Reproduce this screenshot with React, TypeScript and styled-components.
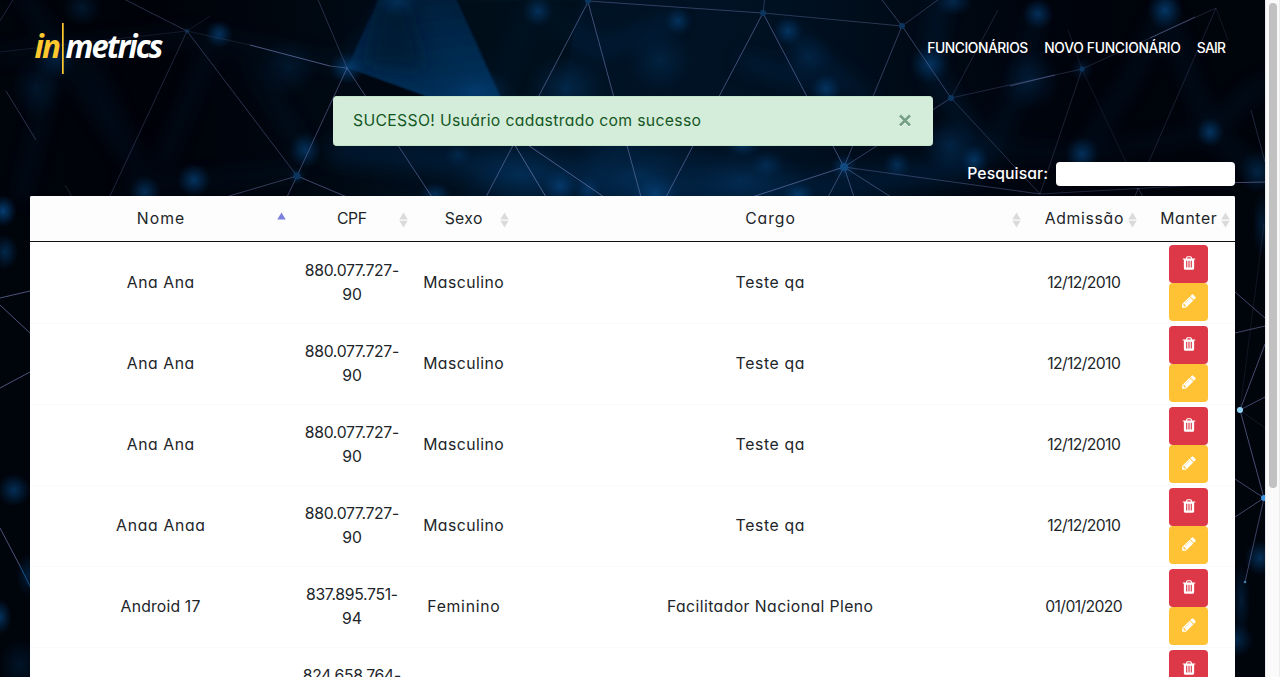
import React from 'react';
import styled, { createGlobalStyle } from 'styled-components';

const GlobalStyle = createGlobalStyle`
  * { box-sizing: border-box; }
  html, body { margin: 0; padding: 0; }
  body {
    height: 677px;
    overflow: hidden;
    background: #000207;
    color: #212529;
    font-family: Inter, "Noto Sans", sans-serif;
    font-feature-settings: "cv11" 1;
    font-size: 15.75px;
    line-height: 24px;
  }
`;

const Window = styled.div`
  position: relative;
  display: flex;
  width: 1280px;
  height: 677px;
  overflow: hidden;
`;

const Backdrop = styled.svg`
  position: absolute;
  inset: 0 auto auto 0;
`;

const Page = styled.div`
  position: relative;
  width: 1265px;
  padding: 0 30px;
`;

const ScrollTrack = styled.div`
  position: relative;
  width: 15px;
  padding: 3px 3px 0 4px;
  background: #fafafa;
  border-left: 1px solid #e8e8e8;
  border-right: 1px solid #ededed;
`;

const ScrollThumb = styled.div`
  width: 8px;
  margin-left: -1px;
  height: 485px;
  border-radius: 4px;
  background: #c1c1c1;
`;

const Header = styled.header`
  display: flex;
  justify-content: space-between;
  align-items: center;
  height: 96px;
  padding: 0 9px 0 0;
`;

const Nav = styled.nav`
  display: flex;
  gap: 16px;
`;

const Txt = styled.span<{ $ls?: number }>`
  white-space: nowrap;
  letter-spacing: ${(p) => p.$ls ?? 0}px;
  margin-right: ${(p) => -(p.$ls ?? 0)}px;
`;

const NavLink = styled(Txt)`
  color: #fff;
  font-size: 13.8px;
  font-weight: 500;
`;

const Alert = styled.div`
  display: flex;
  justify-content: space-between;
  align-items: center;
  width: 600px;
  height: 50px;
  margin: 0 auto 16px 303px;
  padding: 0 21px 0 20px;
  border: 1px solid #c3e6cb;
  border-width: 1px 0;
  border-radius: 4px;
  background: #d4edda;
  color: #155724;
`;

const CloseIcon = styled.svg`
  display: block;
`;

const SearchRow = styled.label`
  display: flex;
  justify-content: flex-end;
  align-items: center;
  height: 24px;
  margin-bottom: 10px;
  gap: 8px;
  color: #fff;
  font-weight: 500;
`;

const SearchInput = styled.input`
  width: 179px;
  height: 24px;
  padding: 0 4px;
  border: 0;
  border-radius: 4px;
  background: #fff;
`;

const Table = styled.div`
  width: 1205px;
  background: #fff;
  border-radius: 2px 2px 0 0;
`;

const Row = styled.div`
  display: grid;
  grid-template-columns: 261px 122px 101px 512px 116px 93px;
  align-items: center;
  height: 81px;
  border-top: 1px solid #fafafa;
  text-align: center;
  &:nth-child(2) { border-top-color: transparent; }
`;

const HeadRow = styled(Row)`
  height: 46px;
  border-top: 0;
  border-bottom: 1px solid #111;
  border-radius: 2px 2px 0 0;
  background: #fdfdfd;
`;

const HeadCell = styled.div`
  position: relative;
`;

const SortIcon = styled.svg`
  position: absolute;
  right: 5px;
  top: 5px;
`;

const Cell = styled.div``;

const Actions = styled.div`
  display: flex;
  flex-direction: column;
  align-items: center;
`;

const ActionButton = styled.button<{ $color: string }>`
  display: flex;
  justify-content: center;
  align-items: center;
  width: 39px;
  height: 38px;
  padding: 0 0 2px 0;
  border: 0;
  border-radius: 4px;
  background: ${(p) => p.$color};
`;

type Line = [number, number, number, number, number];
const lines: Line[] = [
  [187, 31, 116, -5, 0.32], [187, 31, 0, 52, 0.14], [187, 31, 210, 16, 0.14], [187, 31, 250, 45, 0.15],
  [250, 45, 330, 66, 0.6], [330, 66, 347, 68, 0.4], [187, 31, 297, 176, 0.35], [187, 31, 110, 196, 0.26],
  [297, 176, 229, 196, 0.4], [297, 176, 347, 197, 0.5], [297, 176, 287, 197, 0.45], [297, 176, 347, 68, 0.45],
  [347, 68, 316, -5, 0.3], [347, 68, 432, 197, 0.5], [588, 2, 486, 197, 0.5], [588, 2, 641, 197, 0.5],
  [588, 1, 763, 13, 0.38], [763, 13, 902, 26, 0.33], [513, 142, 546, 197, 0.6], [522, 141, 604, 197, 0.6],
  [763, 13, 666, 197, 0.5], [763, 13, 844, 167, 0.5], [763, 13, 765, -4, 0.3], [902, 26, 879, -4, 0.4],
  [902, 26, 942, -3, 0.32], [902, 26, 951, 98, 0.42], [902, 26, 844, 167, 0.4], [951, 98, 844, 167, 0.4],
  [951, 98, 1082, 69, 0.24], [1010, 86, 1055, 75, 0.42], [951, 98, 998, 10, 0.22], [951, 98, 1040, 194, 0.3],
  [844, 167, 752, 197, 0.55], [844, 167, 828, 197, 0.45], [844, 167, 854, 197, 0.45], [844, 167, 891, 197, 0.45],
  [844, 167, 1040, 194, 0.35], [1082, 69, 1216, 8, 0.22], [1150, 38, 1195, 17, 0.4], [1082, 69, 1040, 194, 0.22],
  [1082, 69, 1068, 30, 0.15], [1082, 69, 1126, 162, 0.13], [1216, 8, 1147, 166, 0.2], [1216, 8, 1228, 40, 0.15],
  [1040, 194, 1235, 183, 0.25], [1216, 183, 1265, 182, 0.5], [1251, 110, 1265, 162, 0.25],
  [1135, 197, 1138, 188, 0.3], [1138, 188, 1143, 197, 0.3],
  [6, 91, 36, 140, 0.34], [0, 21, 14, -2, 0.25], [65, 185, 72, 197, 0.2],
  [0, 298, 30, 291, 0.6], [0, 305, 30, 333, 0.6], [0, 388, 30, 372, 0.6], [0, 528, 20, 566, 0.6],
  [1235, 292, 1265, 318, 0.5], [1235, 333, 1265, 326, 0.5], [1240, 410, 1265, 344, 0.55],
  [1240, 410, 1265, 397, 0.5], [1240, 410, 1264, 498, 0.55], [1235, 479, 1264, 498, 0.5],
  [1235, 517, 1264, 498, 0.5], [1264, 498, 1245, 582, 0.45], [1240, 410, 1264, 224, 0.12],
  [1240, 410, 1265, 428, 0.15],
];

// x, y, horizontal radius, vertical radius, opacity
type Glow = [number, number, number, number, number];
const glows: Glow[] = [
  [82, 8, 20, 18, 0.3], [55, 58, 22, 22, 0.4], [36, 88, 26, 32, 0.25], [219, 34, 14, 14, 0.7],
  [194, 180, 17, 17, 0.7], [145, 192, 16, 16, 0.6], [305, 150, 16, 18, 0.65], [288, 68, 30, 30, 0.25],
  [347, 68, 18, 16, 0.75], [397, 2, 24, 16, 0.45], [475, 92, 44, 24, 0.5], [538, 11, 16, 16, 0.6],
  [565, 88, 40, 34, 0.4], [458, 155, 14, 12, 0.35], [435, 194, 16, 12, 0.6], [560, 186, 18, 18, 0.75],
  [588, 190, 14, 16, 0.6], [655, 194, 26, 20, 0.8], [678, 21, 14, 14, 0.6], [660, 60, 34, 34, 0.3],
  [788, 31, 15, 15, 0.65], [808, 58, 26, 24, 0.3], [826, 89, 16, 16, 0.65], [743, 145, 18, 12, 0.6],
  [767, 165, 18, 14, 0.45], [798, 194, 18, 12, 0.7], [930, 64, 20, 20, 0.65], [897, 165, 14, 14, 0.55],
  [953, 2, 20, 14, 0.5], [950, 145, 28, 30, 0.4], [974, 160, 15, 16, 0.65], [1038, 14, 16, 16, 0.65],
  [1030, 80, 32, 32, 0.3], [1082, 154, 17, 18, 0.65], [1165, 10, 18, 20, 0.75], [1210, 132, 14, 15, 0.7],
  [1258, 172, 20, 22, 0.45], [1082, 69, 12, 12, 0.3], [297, 176, 9, 9, 0.4], [844, 167, 14, 14, 0.6],
  [520, 175, 70, 40, 0.4], [640, 175, 90, 44, 0.45], [740, 180, 70, 36, 0.4],
  [3, 211, 14, 16, 0.9], [5, 252, 14, 18, 0.55], [14, 490, 17, 17, 0.65], [0, 617, 12, 18, 0.7],
  [28, 575, 12, 22, 0.4], [20, 665, 22, 28, 0.25], [1260, 558, 16, 18, 0.65], [1236, 640, 18, 18, 0.55],
  [1241, 600, 10, 40, 0.35], [1262, 224, 10, 34, 0.35],
];

const NetworkBackdrop = () => (
  <Backdrop width="1265" height="677" viewBox="0 0 1265 677" aria-hidden="true">
    <defs>
      <linearGradient id="base">
        <stop offset="0" stopColor="#00040b" />
        <stop offset="0.12" stopColor="#000209" />
        <stop offset="0.25" stopColor="#000811" />
        <stop offset="0.42" stopColor="#001426" />
        <stop offset="0.62" stopColor="#001122" />
        <stop offset="0.74" stopColor="#000914" />
        <stop offset="0.85" stopColor="#00030b" />
        <stop offset="1" stopColor="#00040b" />
      </linearGradient>
      <radialGradient id="glow">
        <stop offset="0" stopColor="#064680" />
        <stop offset="0.45" stopColor="#04386a" stopOpacity="0.65" />
        <stop offset="1" stopColor="#022a54" stopOpacity="0" />
      </radialGradient>
      <linearGradient id="shard" x1="0.5" y1="0" x2="0.7" y2="1">
        <stop offset="0" stopColor="#012240" />
        <stop offset="1" stopColor="#043c70" />
      </linearGradient>
      <filter id="soft" x="-30%" y="-30%" width="160%" height="160%">
        <feGaussianBlur stdDeviation="9" />
      </filter>
      <filter id="edge"><feGaussianBlur stdDeviation="1.2" /></filter>
    </defs>
    <rect width="1265" height="677" fill="url(#base)" />
    <g filter="url(#soft)" fill="none" stroke="#022c52" strokeWidth="13" opacity="0.42">
      <path d="M20 -10L130 160M55 60L20 200M90 60L150 195M210 50L160 170M250 60L310 160" opacity="0.5" />
      <path d="M0 55L190 35L400 75M120 190L300 170" opacity="0.4" />
      <path d="M345 68L400 0M430 0L490 100M530 10L500 90M678 20L600 50L540 10M788 31L870 100" />
      <path d="M330 150L450 160L660 195L850 185L980 165" strokeWidth="26" />
      <path d="M560 190L640 130M740 60L840 90M940 0L930 70L990 160" />
      <path d="M1035 15L1025 80L985 160M1165 10L1130 80L1082 155M1165 10L1210 132L1265 175M1210 130L1265 80" opacity="0.6" />
      <path d="M930 145L1080 155L1210 132" opacity="0.4" />
    </g>
    <polygon points="457,0 580,0 560,96 501,96" fill="#000915" opacity="0.6" filter="url(#edge)" />
    <polygon points="380,-4 455,-4 501,98 430,98 347,68" fill="url(#shard)" opacity="0.75" filter="url(#edge)" />
    <polygon points="383,0 404,0 425,70 366,64" fill="#00162c" opacity="0.6" filter="url(#soft)" />
    <polygon points="347,68 430,98 366,98" fill="#00060e" opacity="0.7" />
    {glows.map(([x, y, rx, ry, o], i) => (
      <ellipse key={i} cx={x} cy={y} rx={rx} ry={ry} fill="url(#glow)" opacity={o} />
    ))}
    <g stroke="#8088c4">
      {lines.map(([x1, y1, x2, y2, o], i) => (
        <line key={i} x1={x1} y1={y1} x2={x2} y2={y2} opacity={o} />
      ))}
    </g>
    <line x1="20" y1="566" x2="31" y2="588" stroke="#12578f" />
    <g fill="#0c355e">
      <circle cx="187" cy="31" r="2.5" opacity="0.5" />
      <circle cx="297" cy="176" r="3.5" />
      <circle cx="588" cy="1" r="3" />
      <circle cx="763" cy="13" r="3" />
      <circle cx="902" cy="26" r="3" />
      <circle cx="951" cy="98" r="3" />
      <circle cx="1082" cy="69" r="2.5" />
      <circle cx="844" cy="167" r="4" fill="#124a80" />
    </g>
    <circle cx="1240" cy="410" r="3" fill="#8fd0f2" />
    <circle cx="1264" cy="498" r="3" fill="#3c93dc" />
    <circle cx="1245" cy="582" r="1.3" fill="#477cab" />
  </Backdrop>
);

const Logo = () => (
  <svg width="140" height="60" viewBox="30 18 140 60" role="img" aria-label="inmetrics">
    <g fontFamily="Open Sans" fontStyle="italic" fontWeight="700" fontSize="33" letterSpacing="-2">
      <text x="34.500" y="58" fill="#ffc92e" textLength="24.500" lengthAdjust="spacingAndGlyphs">in</text>
      <text x="65.500" y="58" fill="#fff" textLength="96" lengthAdjust="spacingAndGlyphs">metrics</text>
    </g>
    <rect x="62" y="23" width="1.700" height="51" fill="#ffc92e" />
  </svg>
);

const TrashIcon = () => (
  <svg width="16" height="16" viewBox="0 0 1792 1792" fill="#fff">
    <path d="M704 1376v-704q0-14-9-23t-23-9h-64q-14 0-23 9t-9 23v704q0 14 9 23t23 9h64q14 0 23-9t9-23zm256 0v-704q0-14-9-23t-23-9h-64q-14 0-23 9t-9 23v704q0 14 9 23t23 9h64q14 0 23-9t9-23zm256 0v-704q0-14-9-23t-23-9h-64q-14 0-23 9t-9 23v704q0 14 9 23t23 9h64q14 0 23-9t9-23zm-544-992h448l-48-117q-7-9-17-11h-317q-10 2-17 11zm928 32v64q0 14-9 23t-23 9h-96v948q0 83-47 143.500t-113 60.500h-832q-66 0-113-58.500t-47-141.500v-952h-96q-14 0-23-9t-9-23v-64q0-14 9-23t23-9h309l70-167q15-37 54-63t79-26h320q40 0 79 26t54 63l70 167h309q14 0 23 9t9 23z" />
  </svg>
);

const PencilIcon = () => (
  <svg width="16" height="16" viewBox="0 0 1792 1792" fill="#fff">
    <path d="M491 1536l91-91-235-235-91 91v107h128v128h107zm523-928q0-22-22-22-10 0-17 7l-542 542q-7 7-7 17 0 22 22 22 10 0 17-7l542-542q7-7 7-17zm-54-192l416 416-832 832h-416v-416zm683 96q0 53-37 90l-166 166-416-416 166-165q36-38 90-38 53 0 91 38l235 234q37 39 37 91z" />
  </svg>
);

const Sort = ({ active }: { active?: boolean }) => (
  <SortIcon width="9" height="16" viewBox="0 0 9 16">
    <path d="M4.500 0.500L8.700 7.500H0.300Z" fill={active ? '#7b7fde' : '#dadada'} />
    {!active && <path d="M4.500 15.500L8.700 8.700H0.300Z" fill="#dadada" />}
  </SortIcon>
);

const columns: [string, number][] = [
  ['Nome', 1], ['CPF', -0.4], ['Sexo', 0.35], ['Cargo', 0.95], ['Admissão', 0.7], ['Manter', 0.65],
];

const employees = [
  { name: 'Ana Ana', nls: 0.55, cpf: ['880.077.727-', '90'], sex: 'Masculino', role: 'Teste qa', rls: 0.65, date: '12/12/2010' },
  { name: 'Ana Ana', nls: 0.55, cpf: ['880.077.727-', '90'], sex: 'Masculino', role: 'Teste qa', rls: 0.65, date: '12/12/2010' },
  { name: 'Ana Ana', nls: 0.55, cpf: ['880.077.727-', '90'], sex: 'Masculino', role: 'Teste qa', rls: 0.65, date: '12/12/2010' },
  { name: 'Anaa Anaa', nls: 0.68, cpf: ['880.077.727-', '90'], sex: 'Masculino', role: 'Teste qa', rls: 0.65, date: '12/12/2010' },
  { name: 'Android 17', nls: 0.18, cpf: ['837.895.751-', '94'], sex: 'Feminino', role: 'Facilitador Nacional Pleno', rls: 0.42, date: '01/01/2020' },
  { name: 'Android 17', nls: 0.18, cpf: ['824.658.764-', '12'], sex: 'Feminino', role: 'Facilitador Nacional Pleno', rls: 0.42, date: '01/01/2020' },
];

export default function App() {
  return (
    <>
      <GlobalStyle />
      <Window>
        <NetworkBackdrop />
        <Page>
          <Header>
            <Logo />
            <Nav>
              <NavLink $ls={-0.42}>FUNCIONÁRIOS</NavLink>
              <NavLink $ls={-0.28}>NOVO FUNCIONÁRIO</NavLink>
              <NavLink $ls={-0.7}>SAIR</NavLink>
            </Nav>
          </Header>
          <Alert>
            <Txt $ls={0.325}>SUCESSO! Usuário cadastrado com sucesso</Txt>
            <CloseIcon width="14" height="14" viewBox="0 0 14 14">
              <path d="M2.500 3L12 12.800M11.500 3L2 12.800" stroke="#fff" strokeWidth="2.200" />
              <path d="M2 1.500L12 11.500M12 1.500L2 11.500" stroke="#75a184" strokeWidth="2.600" />
            </CloseIcon>
          </Alert>
          <SearchRow>
            <Txt $ls={0.08}>Pesquisar:</Txt>
            <SearchInput />
          </SearchRow>
          <Table>
            <HeadRow>
              {columns.map(([label, ls], i) => (
                <HeadCell key={label}>
                  <Txt $ls={ls}>{label}</Txt>
                  <Sort active={i === 0} />
                </HeadCell>
              ))}
            </HeadRow>
            {employees.map((e, i) => (
              <Row key={i}>
                <Cell><Txt $ls={e.nls}>{e.name}</Txt></Cell>
                <Cell>
                  <Txt $ls={-0.32}>{e.cpf[0]}</Txt><br />
                  <Txt>{e.cpf[1]}</Txt>
                </Cell>
                <Cell><Txt $ls={e.sex === 'Feminino' ? 0.75 : 0.47}>{e.sex}</Txt></Cell>
                <Cell><Txt $ls={e.rls}>{e.role}</Txt></Cell>
                <Cell><Txt $ls={-0.62}>{e.date}</Txt></Cell>
                <Actions>
                  <ActionButton $color="#dc3848" aria-label="Excluir"><TrashIcon /></ActionButton>
                  <ActionButton $color="#ffc235" aria-label="Editar"><PencilIcon /></ActionButton>
                </Actions>
              </Row>
            ))}
          </Table>
        </Page>
        <ScrollTrack><ScrollThumb /></ScrollTrack>
      </Window>
    </>
  );
}
